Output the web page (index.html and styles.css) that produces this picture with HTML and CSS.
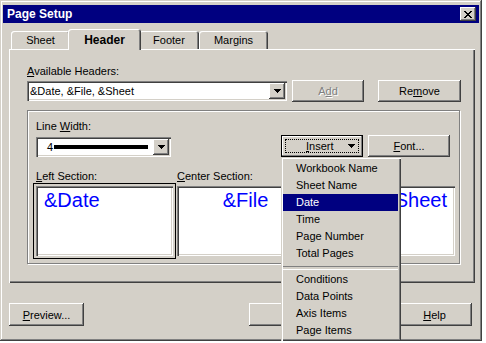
FILE: index.html
```html
<!DOCTYPE html>
<html lang="en">
<head>
  <meta charset="UTF-8" />
  <title>Page Setup</title>
  <link rel="stylesheet" href="styles.css">
</head>
<body>
  <div class="window">
    <div class="titlebar">
      <span>Page Setup</span>
      <button class="close-btn">
        <svg width="8" height="7" viewBox="0 0 8 7"><path d="M0 0h2v1h1v1h2v-1h1v-1h2v1h-1v1h-1v1h-1v1h1v1h1v1h1v1h-2v-1h-1v-1h-2v1h-1v1h-2v-1h1v-1h1v-1h1v-1h-1v-1h-1v-1h-1z" fill="#000"/></svg>
      </button>
    </div>

    <div class="tabs">
      <div class="tab tab-sheet">Sheet</div>
      <div class="tab tab-header active">Header</div>
      <div class="tab tab-footer">Footer</div>
      <div class="tab tab-margins">Margins</div>
    </div>

    <div class="panel">
      <div class="lbl"><u>A</u>vailable Headers:</div>
      <div class="row-headers">
        <div class="combo combo-headers">
          <span class="combo-text">&amp;Date, &amp;File, &amp;Sheet</span>
          <span class="drop-btn"><svg width="7" height="4" viewBox="0 0 7 4"><path d="M0 0h7v1h-1v1h-1v1h-1v1h-1v-1h-1v-1h-1v-1h-1z" fill="#000"/></svg></span>
        </div>
        <button class="btn btn-add" disabled>A<u>d</u>d</button>
        <button class="btn btn-remove">Re<u>m</u>ove</button>
      </div>

      <div class="group">
        <div class="lbl">Line <u>W</u>idth:</div>
        <div class="row-line">
          <div class="combo combo-line">
            <span class="line-num">4</span>
            <span class="line-sample"></span>
            <span class="drop-btn"><svg width="7" height="4" viewBox="0 0 7 4"><path d="M0 0h7v1h-1v1h-1v1h-1v1h-1v-1h-1v-1h-1v-1h-1z" fill="#000"/></svg></span>
          </div>
          <button class="btn btn-insert">
            <span class="focus-rect">
              <span class="insert-text"><u>I</u>nsert</span>
              <svg width="7" height="4" viewBox="0 0 7 4"><path d="M0 0h7v1h-1v1h-1v1h-1v1h-1v-1h-1v-1h-1v-1h-1z" fill="#000"/></svg>
            </span>
          </button>
          <button class="btn btn-font"><u>F</u>ont...</button>
        </div>

        <div class="sections">
          <div class="section">
            <div class="lbl sec-lbl"><u>L</u>eft Section:</div>
            <div class="box box-left">&amp;Date</div>
          </div>
          <div class="section">
            <div class="lbl sec-lbl"><u>C</u>enter Section:</div>
            <div class="box box-center">&amp;File</div>
          </div>
          <div class="section">
            <div class="lbl sec-lbl"><u>R</u>ight Section:</div>
            <div class="box box-right">&amp;Sheet</div>
          </div>
        </div>
      </div>
    </div>

    <div class="footer-btns">
      <button class="btn btn-preview"><u>P</u>review...</button>
      <button class="btn btn-ok">OK</button>
      <button class="btn btn-cancel">Cancel</button>
      <button class="btn btn-help"><u>H</u>elp</button>
    </div>

    <div class="menu">
      <div class="menu-item">Workbook Name</div>
      <div class="menu-item">Sheet Name</div>
      <div class="menu-item selected">Date</div>
      <div class="menu-item">Time</div>
      <div class="menu-item">Page Number</div>
      <div class="menu-item">Total Pages</div>
      <div class="menu-sep"></div>
      <div class="menu-item">Conditions</div>
      <div class="menu-item">Data Points</div>
      <div class="menu-item">Axis Items</div>
      <div class="menu-item">Page Items</div>
    </div>
  </div>
</body>
</html>
```

FILE: styles.css
```css
* {
  box-sizing: border-box;
}

body {
  margin: 0;
  background: #ffffff;
  font-family: "Liberation Sans", Arial, sans-serif;
  font-size: 11px;
  color: #000;
}

u {
  text-decoration: underline;
  text-underline-offset: 1px;
}

/* window frame */
.window {
  position: relative;
  width: 482px;
  height: 341px;
  background: #d4d0c8;
  padding: 5px 3px 3px;
  box-shadow: inset -1px -1px #404040, inset 1px 1px #d4d0c8, inset -2px -2px #808080, inset 2px 2px #ffffff;
}

.titlebar {
  height: 18px;
  background: #000080;
  color: #fff;
  display: flex;
  align-items: center;
  justify-content: space-between;
  padding: 0 3px 0 4px;
  font-weight: bold;
  font-size: 12px;
}

.close-btn {
  width: 16px;
  height: 14px;
  padding: 0;
  border: none;
  background: #d4d0c8;
  display: flex;
  align-items: center;
  justify-content: center;
  box-shadow: inset -1px -1px #404040, inset 1px 1px #ffffff, inset -2px -2px #808080;
}

/* tabs */
.tabs {
  display: flex;
  align-items: flex-end;
  height: 20px;
  margin-top: 6px;
  padding-left: 8px;
  position: relative;
  z-index: 1;
}

.tab {
  height: 18px;
  padding-top: 3px;
  line-height: 13px;
  text-align: center;
  background: #d4d0c8;
  border-radius: 3px 3px 0 0;
  box-shadow: inset 1px 1px #ffffff, inset -1px 0 #404040, inset -2px 0 #808080;
}

.tab-sheet { width: 59px; }
.tab-header { width: 69px; }
.tab-footer { width: 60px; }
.tab-margins { width: 69px; }

.tab.active {
  position: relative;
  z-index: 2;
  width: 73px;
  height: 21px;
  margin: 0 -2px -1px;
  padding-top: 5px;
  font-weight: bold;
  font-size: 12px;
}

/* tab page */
.panel {
  margin-left: 6px;
  width: 466px;
  height: 234px;
  padding: 16px 0 0 18px;
  box-shadow: inset 1px 1px #ffffff, inset -1px -1px #404040, inset -2px -2px #808080;
}

.lbl {
  line-height: 13px;
  height: 13px;
  white-space: nowrap;
}

.row-headers {
  display: flex;
  align-items: center;
  height: 22px;
  margin-top: 2px;
}

.combo {
  height: 20px;
  background: #fff;
  display: flex;
  align-items: center;
  padding: 2px;
  box-shadow: inset 1px 1px #808080, inset 2px 2px #404040, inset -1px -1px #ffffff, inset -2px -2px #d4d0c8;
}

.combo-headers {
  width: 260px;
}

.combo-text {
  flex: 1;
  padding-left: 1px;
  white-space: nowrap;
}

.drop-btn {
  width: 16px;
  height: 16px;
  margin-left: auto;
  background: #d4d0c8;
  display: flex;
  align-items: center;
  justify-content: center;
  box-shadow: inset -1px -1px #404040, inset 1px 1px #ffffff, inset -2px -2px #808080;
}

.btn {
  font-family: inherit;
  font-size: 11px;
  color: #000;
  height: 22px;
  padding: 0;
  border: none;
  background: #d4d0c8;
  box-shadow: inset -1px -1px #404040, inset 1px 1px #ffffff, inset -2px -2px #808080;
}

.btn-add {
  width: 72px;
  margin-left: 5px;
  color: #808080;
  text-shadow: 1px 1px #ffffff;
}

.btn-remove {
  width: 83px;
  margin-left: 14px;
}

/* line / section group */
.group {
  width: 433px;
  height: 154px;
  margin-top: 8px;
  padding: 9px 9px 0 8px;
  border: 1px solid #808080;
  box-shadow: inset 1px 1px #ffffff, 1px 1px #ffffff;
}

.row-line {
  display: flex;
  align-items: flex-end;
  height: 22px;
  margin-top: 2px;
}

.combo-line {
  width: 135px;
}

.line-num {
  margin-left: 9px;
}

.line-sample {
  width: 94px;
  height: 4px;
  margin-left: 1px;
  background: #000;
}

.btn-insert {
  width: 82px;
  margin-left: auto;
  padding: 4px;
  border: 1px solid #000;
  box-shadow: inset -1px -1px #808080, inset 1px 1px #ffffff;
}

.focus-rect {
  display: flex;
  align-items: center;
  height: 100%;
  padding: 0 3px 0 20px;
  outline: 1px dotted #000;
}

.insert-text {
  flex: 1;
  text-align: left;
}

.btn-font {
  width: 82px;
  margin-left: 5px;
}

.sections {
  display: grid;
  grid-template-columns: 137px 137px 137px;
  column-gap: 4px;
  margin-top: 13px;
}

.sec-lbl {
  margin-bottom: 3px;
}

.box {
  height: 70px;
  background: #fff;
  padding: 4px 8px;
  color: #0000ff;
  font-size: 20px;
  line-height: 20px;
  white-space: nowrap;
  overflow: hidden;
  box-shadow: inset 1px 1px #808080, inset 2px 2px #404040, inset -1px -1px #ffffff, inset -2px -2px #d4d0c8;
}

.box-left {
  outline: 1px solid #000;
  outline-offset: 2px;
}

.box-center {
  text-align: center;
}

.box-right {
  text-align: right;
}

/* bottom buttons */
.footer-btns {
  display: flex;
  margin-top: 20px;
  padding: 0 7px 0 6px;
}

.footer-btns .btn {
  height: 23px;
}

.btn-preview { width: 75px; }
.btn-ok { width: 72px; margin-left: auto; padding-left: 30px; }
.btn-cancel { width: 72px; margin-left: 2px; }
.btn-help { width: 75px; margin-left: 2px; }

/* insert popup menu */
.menu {
  position: absolute;
  left: 281px;
  top: 157px;
  width: 120px;
  height: 184px;
  background: #d4d0c8;
  padding: 3px 3px 2px 2px;
  z-index: 5;
  box-shadow: inset 1px 1px #d4d0c8, inset 2px 2px #ffffff, inset -1px -1px #404040, inset -2px -2px #808080;
}

.menu-item {
  height: 17px;
  line-height: 17px;
  padding-left: 13px;
  white-space: nowrap;
}

.menu-item.selected {
  background: #000080;
  color: #fff;
}

.menu-sep {
  height: 9px;
  padding-top: 4px;
}

.menu-sep::before {
  content: "";
  display: block;
  height: 2px;
  border-top: 1px solid #808080;
  border-bottom: 1px solid #ffffff;
}
```
